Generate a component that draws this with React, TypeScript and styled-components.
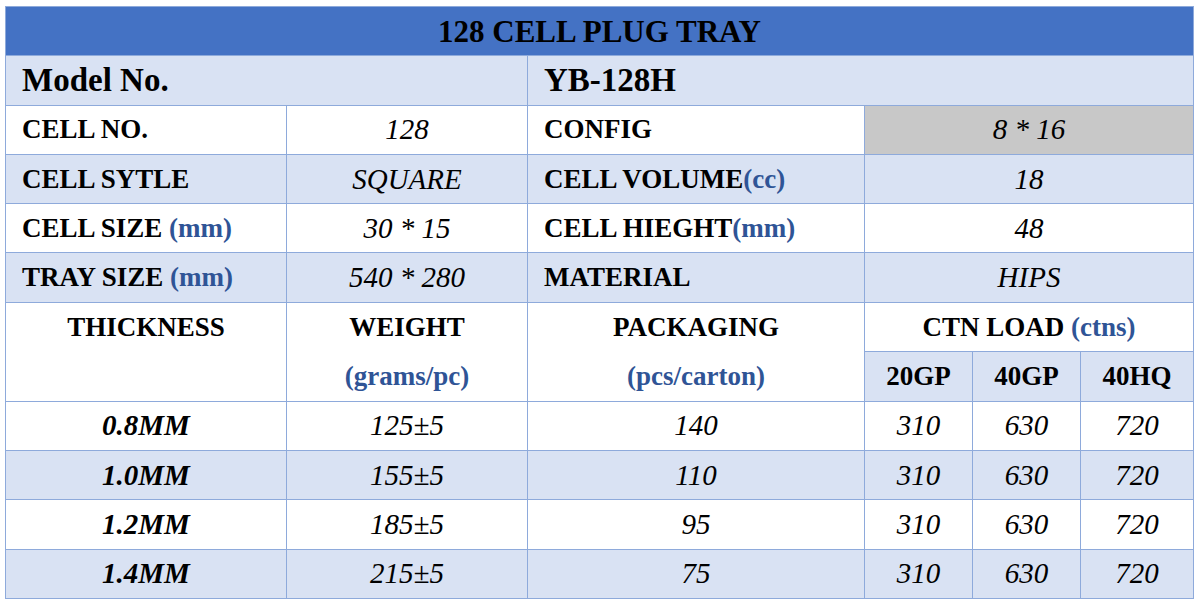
import * as React from 'react';
import styled, { createGlobalStyle } from 'styled-components';

const GlobalStyle = createGlobalStyle`
  html, body {
    margin: 0;
    padding: 0;
    background: #ffffff;
  }
  body {
    font-family: 'Liberation Serif', 'Times New Roman', serif;
    color: #000000;
  }
`;

const StyledPage = styled.div`
  padding: 6px 5px 0 5px;
`;

const StyledTable = styled.table`
  width: 1188px;
  border-collapse: collapse;
  table-layout: fixed;
  border: 1px solid #8eaadb;
`;

interface ICellProps {
  shade?: 'white' | 'light' | 'gray' | 'blue';
  align?: 'left' | 'center';
  valign?: 'top' | 'middle';
}

const shades = {
  white: '#ffffff',
  light: '#d9e2f3',
  gray: '#c8c8c8',
  blue: '#4472c4',
};

const StyledCell = styled.td<ICellProps>`
  height: 48.3px;
  padding: 0 0 0 ${(props) => (props.align === 'left' ? '16px' : '0')};
  border: 1px solid #8eaadb;
  background: ${(props) => shades[props.shade || 'white']};
  text-align: ${(props) => props.align || 'center'};
  vertical-align: ${(props) => props.valign || 'middle'};
  white-space: nowrap;
  line-height: 1;
`;

const Title = styled.span`
  font-size: 31px;
  font-weight: bold;
`;

const ModelText = styled.span`
  font-size: 33px;
  font-weight: bold;
`;

const Label = styled.span`
  font-size: 27px;
  font-weight: bold;
`;

const Unit = styled.span`
  color: #2f5496;
`;

const Value = styled.span`
  font-size: 29px;
  font-style: italic;
`;

const Thickness = styled.span`
  font-size: 29px;
  font-style: italic;
  font-weight: bold;
`;

const HeadLine = styled.div`
  font-size: 27px;
  font-weight: bold;
  line-height: 49px;
  height: 49px;
`;

const infoRows = [
  { label: 'CELL NO.', unit: '', value: '128', label2: 'CONFIG', unit2: '', value2: '8 * 16', shade: 'white' as const },
  { label: 'CELL SYTLE', unit: '', value: 'SQUARE', label2: 'CELL VOLUME', unit2: '(cc)', value2: '18', shade: 'light' as const },
  { label: 'CELL SIZE ', unit: '(mm)', value: '30 * 15', label2: 'CELL HIEGHT', unit2: '(mm)', value2: '48', shade: 'white' as const },
  { label: 'TRAY SIZE ', unit: '(mm)', value: '540 * 280', label2: 'MATERIAL', unit2: '', value2: 'HIPS', shade: 'light' as const },
];

const dataRows = [
  { thickness: '0.8MM', weight: '125±5', pack: '140', shade: 'white' as const },
  { thickness: '1.0MM', weight: '155±5', pack: '110', shade: 'light' as const },
  { thickness: '1.2MM', weight: '185±5', pack: '95', shade: 'white' as const },
  { thickness: '1.4MM', weight: '215±5', pack: '75', shade: 'light' as const },
];

const App: React.FC = () => (
  <StyledPage>
    <GlobalStyle />
    <StyledTable>
      <colgroup>
        <col style={{ width: 281 }} />
        <col style={{ width: 241 }} />
        <col style={{ width: 337 }} />
        <col style={{ width: 108 }} />
        <col style={{ width: 108 }} />
        <col style={{ width: 113 }} />
      </colgroup>
      <tbody>
        <tr>
          <StyledCell colSpan={6} shade="blue">
            <Title>128 CELL PLUG TRAY</Title>
          </StyledCell>
        </tr>
        <tr>
          <StyledCell colSpan={2} shade="light" align="left">
            <ModelText>Model No.</ModelText>
          </StyledCell>
          <StyledCell colSpan={4} shade="light" align="left">
            <ModelText>YB-128H</ModelText>
          </StyledCell>
        </tr>
        {infoRows.map((row, i) => (
          <tr key={row.label}>
            <StyledCell shade={row.shade} align="left">
              <Label>
                {row.label}
                {row.unit && <Unit>{row.unit}</Unit>}
              </Label>
            </StyledCell>
            <StyledCell shade={row.shade}>
              <Value>{row.value}</Value>
            </StyledCell>
            <StyledCell shade={row.shade} align="left">
              <Label>
                {row.label2}
                {row.unit2 && <Unit>{row.unit2}</Unit>}
              </Label>
            </StyledCell>
            <StyledCell colSpan={3} shade={i === 0 ? 'gray' : row.shade}>
              <Value>{row.value2}</Value>
            </StyledCell>
          </tr>
        ))}
        <tr>
          <StyledCell rowSpan={2} valign="top">
            <HeadLine>THICKNESS</HeadLine>
          </StyledCell>
          <StyledCell rowSpan={2} valign="top">
            <HeadLine>WEIGHT</HeadLine>
            <HeadLine>
              <Unit>(grams/pc)</Unit>
            </HeadLine>
          </StyledCell>
          <StyledCell rowSpan={2} valign="top">
            <HeadLine>PACKAGING</HeadLine>
            <HeadLine>
              <Unit>(pcs/carton)</Unit>
            </HeadLine>
          </StyledCell>
          <StyledCell colSpan={3}>
            <Label>
              CTN LOAD <Unit>(ctns)</Unit>
            </Label>
          </StyledCell>
        </tr>
        <tr>
          {['20GP', '40GP', '40HQ'].map((c) => (
            <StyledCell key={c} shade="light">
              <Label>{c}</Label>
            </StyledCell>
          ))}
        </tr>
        {dataRows.map((row) => (
          <tr key={row.thickness}>
            <StyledCell shade={row.shade}>
              <Thickness>{row.thickness}</Thickness>
            </StyledCell>
            <StyledCell shade={row.shade}>
              <Value>{row.weight}</Value>
            </StyledCell>
            <StyledCell shade={row.shade}>
              <Value>{row.pack}</Value>
            </StyledCell>
            <StyledCell shade={row.shade}>
              <Value>310</Value>
            </StyledCell>
            <StyledCell shade={row.shade}>
              <Value>630</Value>
            </StyledCell>
            <StyledCell shade={row.shade}>
              <Value>720</Value>
            </StyledCell>
          </tr>
        ))}
      </tbody>
    </StyledTable>
  </StyledPage>
);

export default App;
